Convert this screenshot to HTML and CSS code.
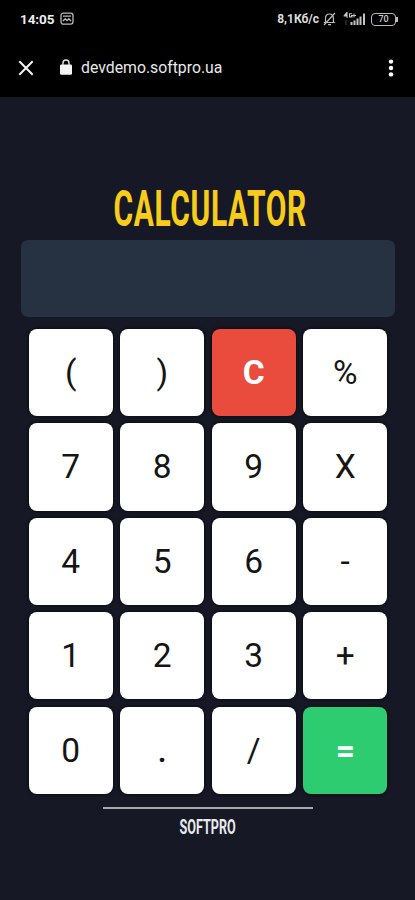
FILE: index.html
```html
<!DOCTYPE html>
<html lang="en">
<head>
<meta charset="utf-8">
<title>Calculator</title>
<link rel="stylesheet" href="styles.css">
</head>
<body>
<header class="chrome">
  <div class="status">
    <span class="time">14:05</span>
    <svg class="shot" width="14" height="14" viewBox="0 0 14 14" fill="none" stroke="#bbb" stroke-width="1.3"><rect x="1" y="1.2" width="12" height="11" rx="2.4"/><path d="M3 4.2h8M3 9l2.3-2.3L7 8.6l1.800-1.900L11 9"/></svg>
    <span class="rate">8,1Кб/с</span>
    <svg class="bell" width="13" height="14" viewBox="0 0 13 14" fill="none" stroke="#bbb" stroke-width="1.2"><path d="M2.5 10.4V6.2C2.5 3.5 4 2 6.4 2s4 1.500 4 4.200v4.200M.8 10.500h11.400M5 12.600h3M1 13L12 1"/></svg>
    <svg class="signal" width="24" height="14" viewBox="0 0 24 14" fill="#c4c4c4"><path d="M3.600 0L.6 3.600v1h3V6h1V0zM6 1.200h3v1H7v2h1V3h1.500v2.400H6zM10.500 1.500h1V3H13v1h-1.500v1.500h-1V4H9.500V3h1z"/><path d="M7.500 10h2v3h-2zM10.500 8.500h2V13h-2zM13.500 6.500h2V13h-2zM16.500 4.500h2V13h-2zM20 1.500h2V13h-2z"/><path d="M2.500 8h1v5h-1z" opacity=".35"/></svg>
    <div class="battery">70</div>
  </div>
  <div class="toolbar">
    <svg class="close" width="16" height="16" viewBox="0 0 16 16" stroke="#f4f4f4" stroke-width="2"><path d="M1.300 1.300l13.400 13.400M14.700 1.300L1.300 14.700"/></svg>
    <svg class="lock" width="12" height="16" viewBox="0 0 12 16"><rect y="5.500" width="12" height="10.300" rx="1.300" fill="#f4f4f4"/><path d="M3 6V4a3 3 0 016 0v2" fill="none" stroke="#e4e4e4" stroke-width="1.400"/></svg>
    <span class="url">devdemo.softpro.ua</span>
    <svg class="more" width="6" height="18" viewBox="0 0 6 18" fill="#fff"><circle cx="3" cy="2.600" r="2.200"/><circle cx="3" cy="9" r="2.200"/><circle cx="3" cy="15.400" r="2.200"/></svg>
  </div>
</header>
<main class="app">
  <h1 class="title"><span>CALCULATOR</span></h1>
  <div class="display"></div>
  <div class="keys">
    <button>(</button><button>)</button><button class="clear">C</button><button>%</button>
    <button>7</button><button>8</button><button>9</button><button>X</button>
    <button>4</button><button>5</button><button>6</button><button>-</button>
    <button>1</button><button>2</button><button>3</button><button>+</button>
    <button>0</button><button class="dot">.</button><button>/</button><button class="equals">=</button>
  </div>
  <footer class="footer"><span>SOFTPRO</span></footer>
</main>
</body>
</html>
```
FILE: styles.css
```css
* { box-sizing: border-box; }
body {
  margin: 0;
  height: 900px;
  overflow: hidden;
  background: #161925;
  font-family: Roboto, "Liberation Sans", sans-serif;
}
.chrome { height: 97px; background: #000; color: #eee; }
.status { display: flex; align-items: center; height: 38px; padding: 0 19px 0 20px; }
.time { width: 34px; font-size: 13.5px; font-weight: 700; letter-spacing: -0.1px; }
.shot { margin-left: 6px; }
.rate { margin-left: auto; font-size: 12px; font-weight: 700; color: #ddd; }
.bell { margin-left: 4px; }
.signal { margin-left: 7px; }
.battery {
  position: relative;
  width: 25px;
  height: 13px;
  margin-left: 4px;
  border: 1.5px solid #bbb;
  border-radius: 4px;
  font-size: 9px;
  font-weight: 500;
  line-height: 11px;
  text-align: center;
  color: #ccc;
}
.battery::after {
  content: "";
  position: absolute;
  right: -3px;
  top: 3px;
  width: 2px;
  height: 5px;
  background: #bbb;
}
.toolbar { display: flex; align-items: center; height: 59px; padding: 0 21px 0 18px; }
.lock { margin: -2px 9px 0 26px; }
.url { font-size: 15.8px; color: #e8e8e8; }
.more { margin-left: auto; }
.app { display: flex; flex-direction: column; align-items: center; }
.title {
  display: flex;
  justify-content: center;
  width: 100%;
  height: 60px;
  margin: 82px 0 0;
  padding-left: 5px;
  font-size: 50px;
  font-weight: 700;
  line-height: 60px;
  letter-spacing: 1px;
  color: #f8cc1b;
}
.title span { transform: scaleX(.6); }
.display {
  width: 374px;
  height: 77px;
  margin: 1px 0 12px 1px;
  border-radius: 7px;
  background: #263141;
}
.keys {
  display: grid;
  grid-template-columns: repeat(4, 84px);
  grid-auto-rows: 87.2px;
  gap: 7.2px 7.5px;
  margin-left: 1px;
}
.keys button {
  margin: 0;
  padding: 0;
  border: 0;
  border-radius: 8px;
  background: #fff;
  box-shadow: 0 0 3px 1px #0a0c14;
  font: 400 33.5px Roboto, "Liberation Sans", sans-serif;
  color: #151515;
}
.keys .clear { background: #e94c3d; color: #fff; font-weight: 700; }
.keys .equals { background: #2ecc71; color: #fff; font-weight: 700; }
.keys .dot { font-weight: 500; }
.footer {
  display: flex;
  justify-content: center;
  width: 210px;
  margin-top: 13px;
  border-top: 2px solid #a5a8af;
  font-size: 20px;
  font-weight: 700;
  line-height: 37px;
  color: #e8eaee;
}
.footer span { transform: scaleX(.63); }
```
